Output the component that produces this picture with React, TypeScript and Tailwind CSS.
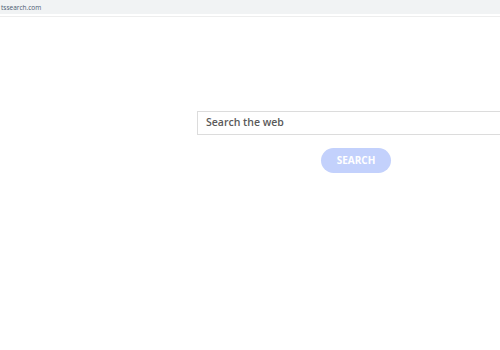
export default function App() {
  return (
    <div className="h-[350px] w-[500px] overflow-hidden bg-white font-['Open_Sans',sans-serif]">
      <div className="h-[14px] bg-[#f1f3f4] pl-[1px] text-[6.5px] leading-[15px] text-[#4a5a70]">tssearch.com</div>
      <div className="mt-[2px] h-px bg-[#eeeeee]" />
      <div className="ml-[197px] mt-[94px] flex flex-col">
        <div className="flex h-[24px] w-[320px] items-center border border-[#dcdcdc] pl-[8px] text-[10.5px] font-semibold text-[#5a5a5a]">
          Search the web
        </div>
        <div className="ml-[124px] mt-[13px] flex h-[25px] w-[70px] items-center justify-center rounded-full bg-[#c3d1fc] text-[10px] font-bold text-white">
          SEARCH
        </div>
      </div>
    </div>
  );
}
